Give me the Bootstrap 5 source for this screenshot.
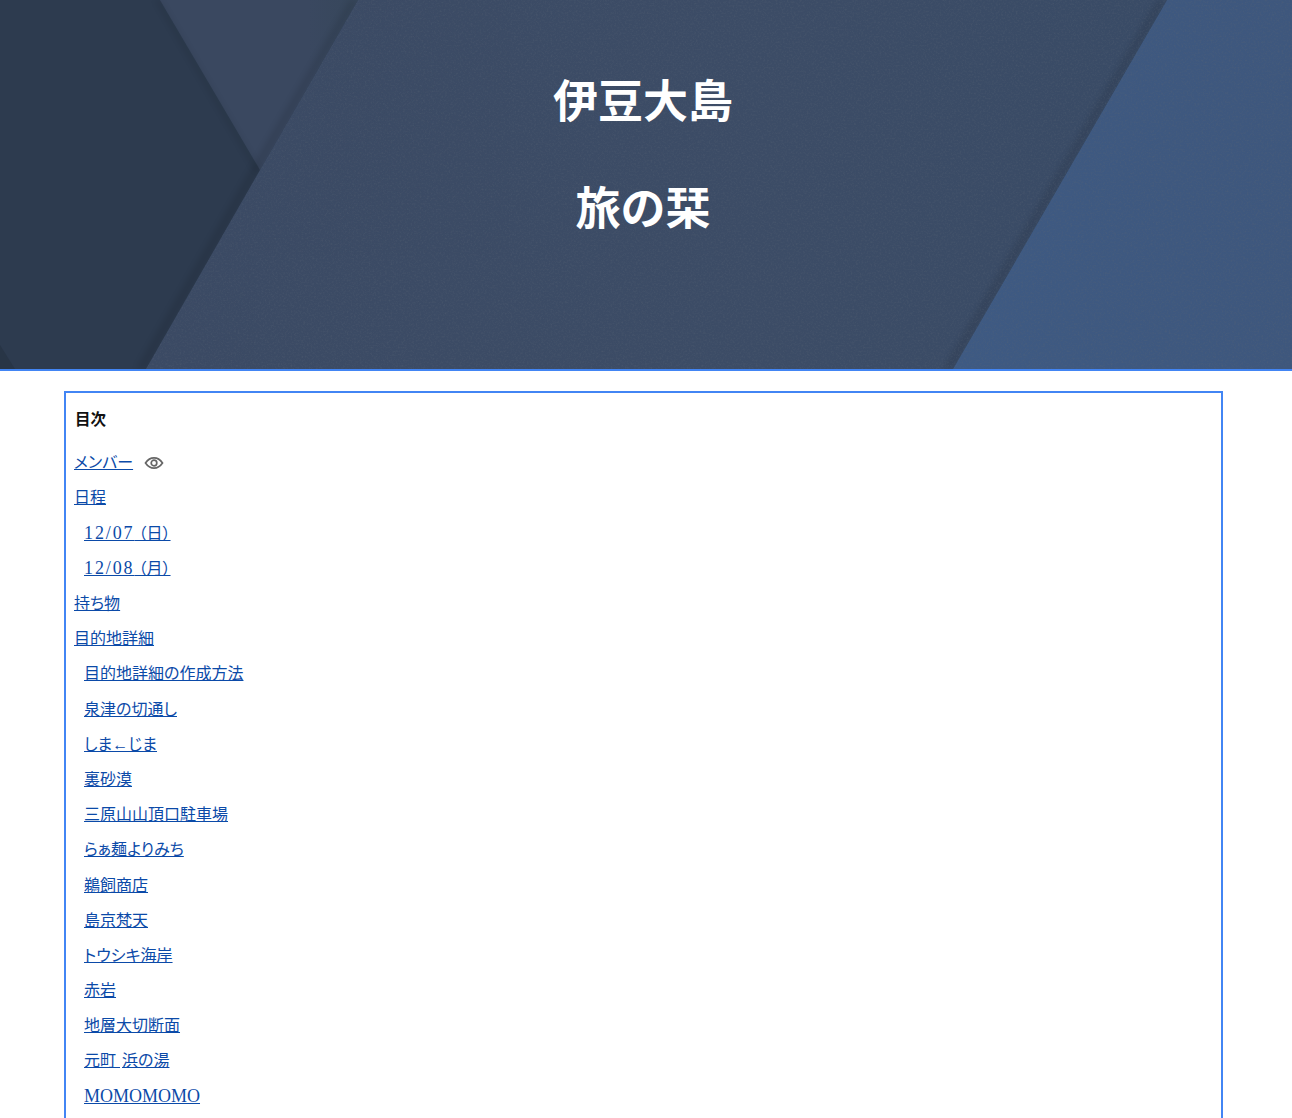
<!DOCTYPE html>
<html lang="ja">
<head>
<meta charset="utf-8">
<title>伊豆大島 旅の栞</title>
<link href="https://cdn.jsdelivr.net/npm/bootstrap@5.3.0/dist/css/bootstrap.min.css" rel="stylesheet">
<style>
html,body{height:100%;overflow:hidden;background:#fff}
body{font-family:"Liberation Serif","Noto Sans CJK JP",serif;font-size:16px;color:#111}
.hero-band{height:371px;border-bottom:2px solid #4285f4;overflow:hidden}
.hero-art{inset:0;width:100%;height:100%}
.hero-title{font-family:"Liberation Serif","Noto Sans CJK JP",serif;font-size:45px;font-weight:700;line-height:1.2;color:#fff;margin:0}
.hero-stack{padding:76px 6px 0 0;gap:53px}
.page-wrap{padding:20px 69px 0 64px}
.toc-box{border:2px solid #4285f4;padding:8px 8px 0 8px}
.toc-head{font-family:"Noto Sans CJK JP",sans-serif;font-weight:700;font-size:15.5px;line-height:24px;margin:5px 0 21.3px 1px}
.toc-row{height:24px;margin-bottom:11.2px;line-height:24px;font-feature-settings:"palt";font-weight:400}
.toc-row a{color:#0b4aa8;text-decoration:underline}
.toc-sub{padding-left:10px}
.latin-run{font-size:18px;line-height:1}
.date-run{letter-spacing:1.9px}
.word-gap{margin-left:2px}
.eye-mark{width:20px;height:20px;margin-left:11px;vertical-align:-5px}
</style>
</head>
<body>
<header class="hero-band position-relative">
  <svg class="hero-art position-absolute" viewBox="0 0 1292 369" preserveAspectRatio="none" aria-hidden="true">
    <defs>
      <linearGradient id="gc" x1="0" x2="1" y1="0" y2="0"><stop offset="0" stop-color="#3b4a64"/><stop offset=".6" stop-color="#3c4c66"/><stop offset="1" stop-color="#394b66"/></linearGradient>
      <linearGradient id="gr" x1="0" x2="1" y1="0" y2="0"><stop offset="0" stop-color="#3e5a83"/><stop offset="1" stop-color="#3e577d"/></linearGradient>
      <linearGradient id="gm" x1="0" x2="1" y1="0" y2="0"><stop offset="0" stop-color="#3a4860"/><stop offset=".75" stop-color="#3a4860"/><stop offset="1" stop-color="#37475b"/></linearGradient>
      <filter id="nz"><feGaussianBlur stdDeviation="3"/></filter>
      <filter id="speck" x="0" y="0" width="100%" height="100%">
        <feTurbulence type="fractalNoise" baseFrequency=".55" numOctaves="2" seed="7"/>
        <feColorMatrix values="0 0 0 0 .1  0 0 0 0 .13  0 0 0 0 .18  1.6 0 0 0 -.72"/>
      </filter>
      <clipPath id="paperclip"><polygon points="358,0 1292,0 1292,369 146,369 260,170"/></clipPath>
    </defs>
    <rect width="1292" height="369" fill="#2d3b4f"/>
    <polygon points="0,345 15,369 0,369" fill="#283546"/>
    <polygon points="160,0 358,0 260,170" fill="url(#gm)"/>
    <polygon points="160,0 260,170 256,172 155,0" fill="#000" opacity=".1" filter="url(#nz)"/>
    <polygon points="358,0 260,170 146,369 136,369 252,167 350,0" fill="#000" opacity=".1" filter="url(#nz)"/>
    <polygon points="358,0 1167,0 953,369 146,369 260,170" fill="url(#gc)"/>
    <polygon points="1167,0 953,369 943,369 1157,0" fill="#000" opacity=".1" filter="url(#nz)"/>
    <polygon points="1167,0 1292,0 1292,369 953,369" fill="url(#gr)"/>
    <g clip-path="url(#paperclip)"><rect width="1292" height="369" filter="url(#speck)" opacity=".45"/></g>
  </svg>
  <div class="hero-stack position-relative d-flex flex-column align-items-center text-center">
    <h1 class="hero-title">伊豆大島</h1>
    <h1 class="hero-title">旅の栞</h1>
  </div>
</header>
<main class="page-wrap">
  <nav class="toc-box">
    <div class="toc-head">目次</div>
    <div class="toc-row"><a href="#">メンバー</a><svg class="eye-mark" viewBox="0 0 20 20" fill="none" stroke="#666" stroke-width="1.7"><path d="M1.5 10C4 6.3 6.8 4.9 10 4.9s6 1.4 8.5 5.1c-2.5 3.7-5.3 5.1-8.5 5.1S4 13.7 1.5 10z"/><circle cx="10" cy="10" r="2.8"/></svg></div>
    <div class="toc-row"><a href="#">日程</a></div>
    <div class="toc-row toc-sub"><a href="#"><span class="latin-run date-run">12/07</span> （日）</a></div>
    <div class="toc-row toc-sub"><a href="#"><span class="latin-run date-run">12/08</span> （月）</a></div>
    <div class="toc-row"><a href="#">持ち物</a></div>
    <div class="toc-row"><a href="#">目的地詳細</a></div>
    <div class="toc-row toc-sub"><a href="#">目的地詳細の作成方法</a></div>
    <div class="toc-row toc-sub"><a href="#">泉津の切通し</a></div>
    <div class="toc-row toc-sub"><a href="#">しま←じま</a></div>
    <div class="toc-row toc-sub"><a href="#">裏砂漠</a></div>
    <div class="toc-row toc-sub"><a href="#">三原山山頂口駐車場</a></div>
    <div class="toc-row toc-sub"><a href="#">らぁ麺よりみち</a></div>
    <div class="toc-row toc-sub"><a href="#">鵜飼商店</a></div>
    <div class="toc-row toc-sub"><a href="#">島京梵天</a></div>
    <div class="toc-row toc-sub"><a href="#">トウシキ海岸</a></div>
    <div class="toc-row toc-sub"><a href="#">赤岩</a></div>
    <div class="toc-row toc-sub"><a href="#">地層大切断面</a></div>
    <div class="toc-row toc-sub"><a href="#">元町 <span class="word-gap">浜の湯</span></a></div>
    <div class="toc-row toc-sub"><a href="#"><span class="latin-run">MOMOMOMO</span></a></div>
    <div class="toc-row toc-sub"></div>
  </nav>
</main>
<script src="https://cdn.jsdelivr.net/npm/bootstrap@5.3.0/dist/js/bootstrap.bundle.min.js"></script>
</body>
</html>
